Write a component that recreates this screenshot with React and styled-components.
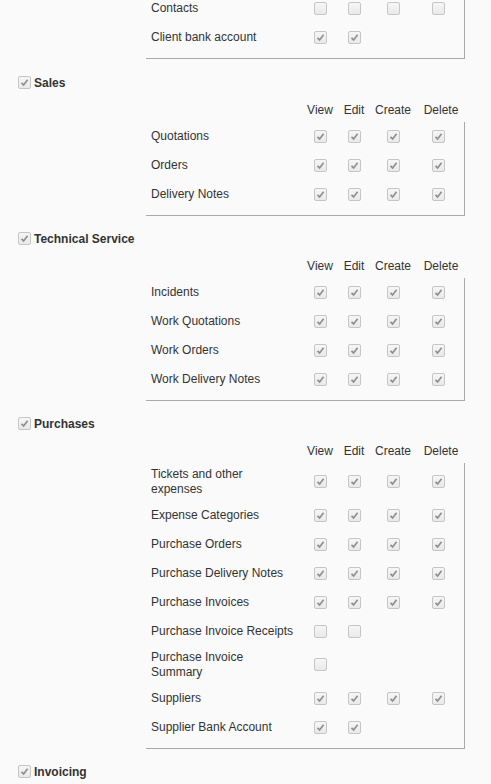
import styled, { createGlobalStyle } from "styled-components";

const GlobalStyle = createGlobalStyle`
  html, body {
    margin: 0;
    padding: 0;
    background: #fafafa;
  }
  body {
    font-family: "Liberation Sans", Arial, sans-serif;
    font-size: 12px;
    color: #333;
  }
`;

const COLUMNS = "157px 34px 34px 44px 46px";

const Page = styled.div`
  width: 491px;
  overflow: hidden;
`;

const Section = styled.section`
  display: flex;
  flex-direction: column;
`;

const SectionTitle = styled.label`
  display: flex;
  align-items: center;
  gap: 3px;
  height: 20px;
  padding-left: 18px;
  font-weight: bold;
  font-size: 12px;
  color: #333;
`;

const HeaderRow = styled.div`
  display: grid;
  grid-template-columns: ${COLUMNS};
  align-items: center;
  height: 24px;
  margin-top: 5px;
  margin-left: 146px;
`;

const HeaderCell = styled.span`
  text-align: center;
  padding-left: ${(p) => p.$shift || 0}px;
  white-space: nowrap;
`;

const Box = styled.div`
  margin-left: 146px;
  width: 318px;
  border-right: 1px solid #a9a9a9;
  border-bottom: 1px solid #a9a9a9;
  padding-bottom: 6px;
  margin-bottom: ${(p) => (p.$cut ? "14px" : "13px")};
  margin-top: ${(p) => (p.$cut ? "-6.5px" : "0")};
`;

const Row = styled.div`
  display: grid;
  grid-template-columns: ${COLUMNS};
  align-items: center;
  padding: 4.5px 0;
`;

const Label = styled.span`
  padding-left: 5px;
  line-height: 14.5px;
  white-space: pre-line;
`;

const Cell = styled.span`
  display: flex;
  align-items: center;
  justify-content: center;
  height: 20px;
`;

const Box13 = styled.span`
  display: inline-flex;
  align-items: center;
  justify-content: center;
  box-sizing: border-box;
  width: 13px;
  height: 13px;
  border: 1px solid #c6c6c6;
  border-radius: 2px;
  background: linear-gradient(#f6f6f6, #e9e9e9);
`;

const Checkbox = ({ checked }) => (
  <Box13>
    {checked && (
      <svg width="9" height="9" viewBox="0 0 9 9">
        <path
          d="M1.5 4.8 L3.6 6.9 L7.6 1.8"
          fill="none"
          stroke="#8f8f8f"
          strokeWidth="1.7"
        />
      </svg>
    )}
  </Box13>
);

// one char per column (view, edit, create, delete): 1 checked, 0 unchecked, - none
const PermRow = ({ label, perms }) => (
  <Row>
    <Label>{label}</Label>
    {perms.split("").map((p, i) => (
      <Cell key={i}>{p !== "-" && <Checkbox checked={p === "1"} />}</Cell>
    ))}
  </Row>
);

const Header = () => (
  <HeaderRow>
    <span />
    <HeaderCell>View</HeaderCell>
    <HeaderCell>Edit</HeaderCell>
    <HeaderCell>Create</HeaderCell>
    <HeaderCell $shift={6}>Delete</HeaderCell>
  </HeaderRow>
);

const sections = [
  {
    title: "Sales",
    rows: [
      ["Quotations", "1111"],
      ["Orders", "1111"],
      ["Delivery Notes", "1111"],
    ],
  },
  {
    title: "Technical Service",
    rows: [
      ["Incidents", "1111"],
      ["Work Quotations", "1111"],
      ["Work Orders", "1111"],
      ["Work Delivery Notes", "1111"],
    ],
  },
  {
    title: "Purchases",
    rows: [
      ["Tickets and other\nexpenses", "1111"],
      ["Expense Categories", "1111"],
      ["Purchase Orders", "1111"],
      ["Purchase Delivery Notes", "1111"],
      ["Purchase Invoices", "1111"],
      ["Purchase Invoice Receipts", "00--"],
      ["Purchase Invoice\nSummary", "0---"],
      ["Suppliers", "1111"],
      ["Supplier Bank Account", "11--"],
    ],
  },
];

export default function App() {
  return (
    <Page>
      <GlobalStyle />
      <Box $cut>
        <PermRow label="Contacts" perms="0000" />
        <PermRow label="Client bank account" perms="11--" />
      </Box>
      {sections.map((s) => (
        <Section key={s.title}>
          <SectionTitle>
            <Checkbox checked />
            {s.title}
          </SectionTitle>
          <Header />
          <Box>
            {s.rows.map(([label, perms]) => (
              <PermRow key={label} label={label} perms={perms} />
            ))}
          </Box>
        </Section>
      ))}
      <Section>
        <SectionTitle>
          <Checkbox checked />
          Invoicing
        </SectionTitle>
      </Section>
    </Page>
  );
}
